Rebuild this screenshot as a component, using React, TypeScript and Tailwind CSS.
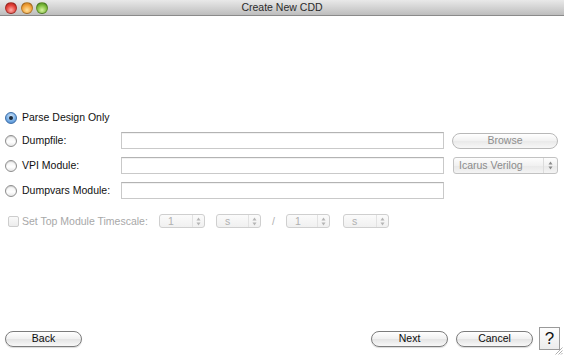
import React from "react";

const font = "font-['Liberation_Sans',Arial,sans-serif]";

function Radio({ checked }: { checked?: boolean }) {
  return checked ? (
    <div className="w-[12px] h-[12px] rounded-full border border-[#3d6ea8] bg-[radial-gradient(circle_at_50%_35%,#d6e9fb,#78aee5_55%,#3f7fc8)] flex items-center justify-center shrink-0">
      <div className="w-[4px] h-[4px] rounded-full bg-[#1b2838]" />
    </div>
  ) : (
    <div className="w-[12px] h-[12px] rounded-full border border-[#8e8e8e] bg-[linear-gradient(#f2f2f2,#ffffff_60%,#e6e6e6)] shadow-[inset_0_1px_1px_rgba(0,0,0,0.15)] shrink-0" />
  );
}

function UpDown({ light }: { light?: boolean }) {
  const c = light ? "#b4b4b4" : "#8a8a8a";
  return (
    <svg width="5" height="9" viewBox="0 0 5 9">
      <path d="M0.5 3.5 L2.5 0.5 L4.5 3.5 Z" fill={c} />
      <path d="M0.5 5.5 L2.5 8.5 L4.5 5.5 Z" fill={c} />
    </svg>
  );
}

function Spinner({ value, width }: { value: string; width: string }) {
  return (
    <div
      className={`${width} h-[14px] flex items-center rounded-[3px] border border-[#cfcfcf] bg-[linear-gradient(#fbfbfb,#f0f0f0)]`}
    >
      <span className="flex-1 pl-[8px] text-[10.5px] leading-none text-[#b0b0b0]">{value}</span>
      <div className="w-[12px] h-full border-l border-[#e2e2e2] flex items-center justify-center">
        <UpDown light />
      </div>
    </div>
  );
}

function Field() {
  return (
    <div className="w-[323px] h-[17px] bg-white border border-[#c9c9c9] border-t-[#b3b3b3] shadow-[inset_0_1px_0_rgba(0,0,0,0.05)]" />
  );
}

function Pill({ label, width, disabled }: { label: string; width: string; disabled?: boolean }) {
  return (
    <div
      className={`${width} h-[16px] rounded-full border flex items-center justify-center text-[10.5px] leading-none ${
        disabled
          ? "border-[#b8b8b8] text-[#8d8d8d] bg-[linear-gradient(#ffffff,#f1f1f1_50%,#e9e9e9_51%,#f7f7f7)]"
          : "border-[#7c7c7c] text-[#0c0c0c] bg-[linear-gradient(#ffffff,#f0f0f0_50%,#e4e4e4_51%,#f8f8f8)] shadow-[0_1px_1px_rgba(0,0,0,0.15)]"
      }`}
    >
      {label}
    </div>
  );
}

function Light({ color }: { color: string }) {
  return <div className={`w-[12px] h-[12px] rounded-full border border-[rgba(0,0,0,0.25)] ${color}`} />;
}

export default function App() {
  return (
    <div className={`w-[564px] h-[356px] flex flex-col bg-white overflow-hidden relative ${font}`}>
      {/* title bar */}
      <div className="h-[16px] shrink-0 flex items-center relative bg-[linear-gradient(#e9e9e9,#cfcfcf_60%,#bdbdbd)] border-b border-[#8a8a8a]">
        <div className="flex items-center gap-[3.5px] pl-[5px]">
          <Light color="bg-[radial-gradient(circle_at_50%_70%,#ffb0aa,#e4423a_55%,#a31d18)]" />
          <Light color="bg-[radial-gradient(circle_at_50%_70%,#ffe2a0,#f2a23a_55%,#b86b12)]" />
          <Light color="bg-[radial-gradient(circle_at_50%_70%,#d8f3a2,#7fbd3c_55%,#3f7a18)]" />
        </div>
        <div className="absolute inset-0 flex items-center justify-center text-[10.5px] text-[#2b2b2b]">
          Create New CDD
        </div>
      </div>

      {/* content */}
      <div className="flex-1 flex flex-col pt-[93px] pl-[5px] text-[10.5px] leading-none text-[#111]">
        <div className="h-[17px] flex items-center">
          <Radio checked />
          <span className="ml-[5px]">Parse Design Only</span>
        </div>

        <div className="h-[17px] mt-[6px] flex items-center">
          <div className="w-[116px] flex items-center">
            <Radio />
            <span className="ml-[5px]">Dumpfile:</span>
          </div>
          <Field />
          <div className="ml-[8px]">
            <Pill label="Browse" width="w-[106px]" disabled />
          </div>
        </div>

        <div className="h-[17px] mt-[8px] flex items-center">
          <div className="w-[116px] flex items-center">
            <Radio />
            <span className="ml-[5px]">VPI Module:</span>
          </div>
          <Field />
          <div className="ml-[9px] w-[105px] h-[17px] flex items-center rounded-[3px] border border-[#c2c2c2] bg-[linear-gradient(#fdfdfd,#f1f1f1_50%,#e8e8e8_51%,#f4f4f4)]">
            <span className="flex-1 pl-[5px] text-[#8b8b8b]">Icarus Verilog</span>
            <div className="w-[14px] h-full border-l border-[#dcdcdc] flex items-center justify-center">
              <UpDown />
            </div>
          </div>
        </div>

        <div className="h-[17px] mt-[8px] flex items-center">
          <div className="w-[116px] flex items-center">
            <Radio />
            <span className="ml-[5px]">Dumpvars Module:</span>
          </div>
          <Field />
        </div>

        <div className="h-[14px] mt-[15px] flex items-center text-[#a8a8a8]">
          <div className="w-[154px] flex items-center">
            <div className="ml-[3px] w-[11px] h-[11px] rounded-[2px] border border-[#cdcdcd] bg-[linear-gradient(#fafafa,#ececec)]" />
            <span className="ml-[3px]">Set Top Module Timescale:</span>
          </div>
          <Spinner value="1" width="w-[46px]" />
          <div className="ml-[11px]">
            <Spinner value="s" width="w-[45px]" />
          </div>
          <span className="ml-[11px] w-[14px] text-[#b0b0b0]">/</span>
          <Spinner value="1" width="w-[44px]" />
          <div className="ml-[13px]">
            <Spinner value="s" width="w-[46px]" />
          </div>
        </div>
      </div>

      {/* footer */}
      <div className="h-[23px] mb-[6px] shrink-0 flex items-center pl-[5px] pr-[4px]">
        <Pill label="Back" width="w-[77px]" />
        <div className="flex-1" />
        <Pill label="Next" width="w-[77px]" />
        <div className="ml-[8px]">
          <Pill label="Cancel" width="w-[77px]" />
        </div>
        <div className="ml-[6px] w-[21px] h-[23px] border border-[#9a9a9a] bg-[linear-gradient(#fdfdfd,#ececec)] flex items-center justify-center text-[17px] text-[#111]">
          ?
        </div>
      </div>

      {/* resize grip */}
      <svg className="absolute right-[1px] bottom-[1px]" width="8" height="8" viewBox="0 0 8 8">
        <path d="M7.5 0.5 L0.5 7.5 M7.5 3.5 L3.5 7.5 M7.5 6 L6 7.5" stroke="#9a9a9a" strokeWidth="0.8" />
      </svg>
    </div>
  );
}
